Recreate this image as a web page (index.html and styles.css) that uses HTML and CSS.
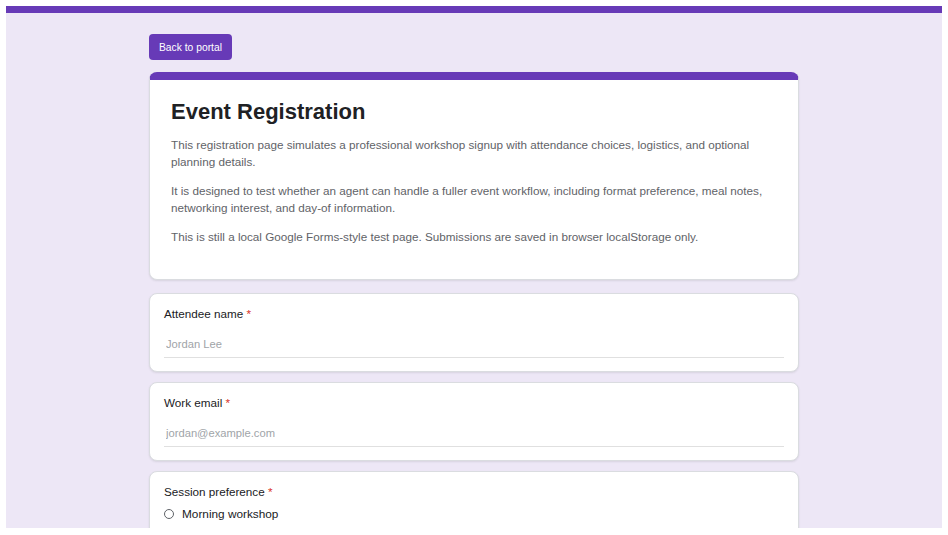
FILE: index.html
```html
<!DOCTYPE html>
<html lang="en">
<head>
    <meta charset="UTF-8">
    <meta name="viewport" content="width=device-width, initial-scale=1.0">
    <title>Event Registration</title>
    <link rel="stylesheet" href="styles.css">
</head>
<body>

    <div class="page">
        <div class="top-bar"></div>

        <div class="form-container">
            <button class="back-button">Back to portal</button>

            <div class="header-card">
                <h1>Event Registration</h1>
                <p>This registration page simulates a professional workshop signup with attendance choices, logistics, and optional planning details.</p>
                <p>It is designed to test whether an agent can handle a fuller event workflow, including format preference, meal notes, networking interest, and day-of information.</p>
                <p>This is still a local Google Forms-style test page. Submissions are saved in browser localStorage only.</p>
            </div>

            <div class="question-card">
                <label class="question-label" for="attendee">Attendee name <span class="required">*</span></label>
                <input id="attendee" type="text" placeholder="Jordan Lee">
            </div>

            <div class="question-card">
                <label class="question-label" for="email">Work email <span class="required">*</span></label>
                <input id="email" type="email" placeholder="jordan@example.com">
            </div>

            <div class="question-card">
                <div class="question-label">Session preference <span class="required">*</span></div>
                <label class="radio-option">
                    <input type="radio" name="session" value="morning">
                    <span class="radio-circle"></span>
                    Morning workshop
                </label>
            </div>
        </div>
    </div>

</body>
</html>
```

FILE: styles.css
```css
html {
    background: #ffffff;
}

body {
    margin: 0;
    padding: 6px;
    font-family: "Liberation Sans", Arial, sans-serif;
    overflow: hidden;
}

.page {
    width: 936px;
    height: 522px;
    background: #ede7f6;
    overflow: hidden;
}

.top-bar {
    height: 7px;
    background: #673ab7;
}

.form-container {
    width: 650px;
    margin: 0 auto;
    padding-top: 21px;
}

.back-button {
    display: block;
    height: 26px;
    padding: 0 10px;
    background-color: #673ab7;
    color: white;
    font-family: "Liberation Sans", Arial, sans-serif;
    font-size: 10.3px;
    border: none;
    border-radius: 4px;
    cursor: pointer;
    margin-bottom: 12px;
}

.header-card,
.question-card {
    background: #ffffff;
    border: 1px solid #dadce0;
    border-radius: 8px;
    box-shadow: 0 1px 2px rgba(60, 64, 67, 0.12);
}

.header-card {
    border-top: 8px solid #673ab7;
    padding: 19px 21px 22px;
    margin-bottom: 13px;
}

.header-card h1 {
    margin: 0 0 12px;
    font-size: 22px;
    line-height: 25px;
    color: #202124;
}

.header-card p {
    margin: 0 0 12px;
    font-size: 11.7px;
    line-height: 17px;
    color: #5f6368;
}

.question-card {
    padding: 12px 14px 13px;
    margin-bottom: 10px;
}

.question-label {
    display: block;
    font-size: 11.7px;
    line-height: 16px;
    color: #202124;
}

.required {
    color: #d93025;
}

.question-card input[type="text"],
.question-card input[type="email"] {
    display: block;
    box-sizing: border-box;
    width: 100%;
    height: 28px;
    margin-top: 8px;
    padding: 0 2px;
    border: none;
    border-bottom: 1px solid #e0e0e0;
    outline: none;
    font-family: "Liberation Sans", Arial, sans-serif;
    font-size: 11.2px;
    color: #202124;
}

.question-card input::placeholder {
    color: #a0a4a8;
}

.radio-option {
    display: flex;
    align-items: center;
    margin-top: 6px;
    font-size: 11.8px;
    line-height: 16px;
    color: #202124;
}

.radio-option input {
    display: none;
}

.radio-circle {
    width: 8px;
    height: 8px;
    margin: 0 8px 0 0;
    border: 1px solid #5f6368;
    border-radius: 50%;
}
```
